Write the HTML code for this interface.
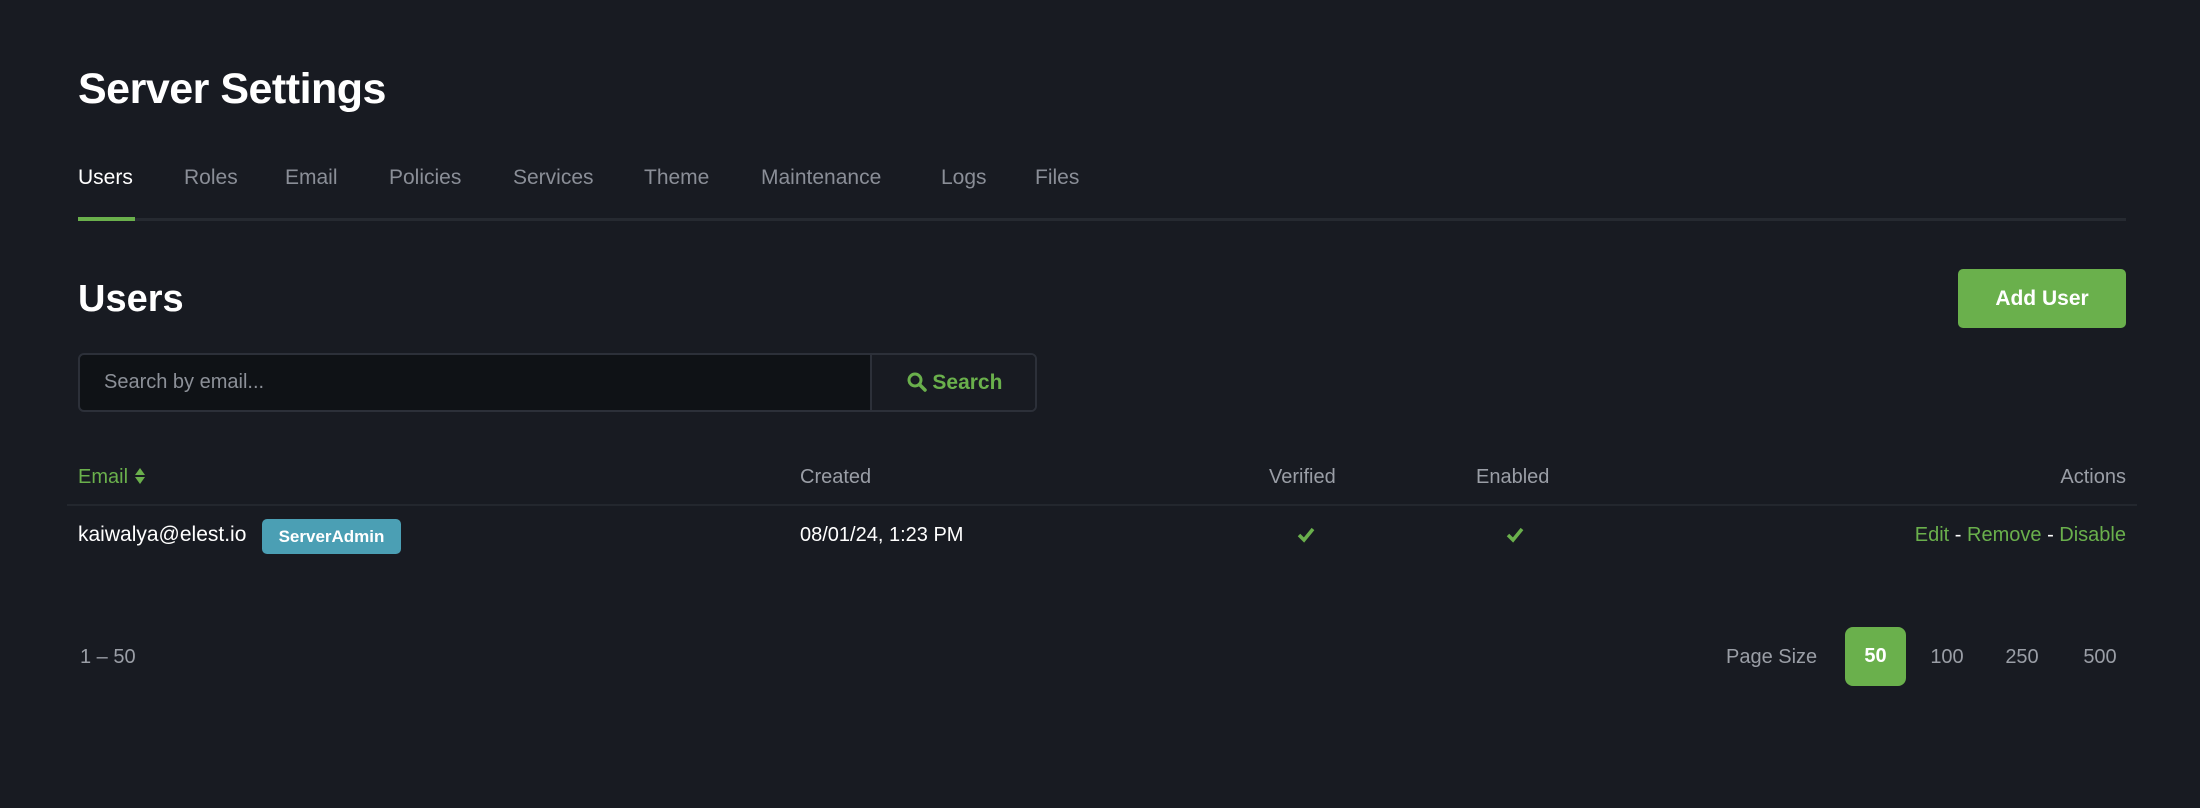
<!DOCTYPE html>
<html><head><meta charset="utf-8"><style>
*{box-sizing:border-box;margin:0;padding:0}
body{width:2200px;height:808px;background:#181b22;font-family:"Liberation Sans",sans-serif;color:#fff;position:relative;overflow:hidden}
.a{position:absolute;white-space:nowrap}
.tab{position:absolute;top:165px;font-size:21px;color:#8a8e97;line-height:26px}
.g{color:#6ab04c}
.h{font-size:20px;color:#9a9ea6;line-height:26px}
</style></head><body>
<div class="a" style="left:78px;top:64px;font-size:43px;font-weight:bold;letter-spacing:-0.5px;line-height:50px">Server Settings</div>
<div class="tab" style="left:78px;color:#fff">Users</div>
<div class="tab" style="left:184px">Roles</div>
<div class="tab" style="left:285px">Email</div>
<div class="tab" style="left:389px">Policies</div>
<div class="tab" style="left:513px">Services</div>
<div class="tab" style="left:644px">Theme</div>
<div class="tab" style="left:761px">Maintenance</div>
<div class="tab" style="left:941px">Logs</div>
<div class="tab" style="left:1035px">Files</div>
<div class="a" style="left:78px;top:218px;width:2048px;height:3px;background:#262a31"></div>
<div class="a" style="left:78px;top:217px;width:57px;height:4px;background:#6ab04c"></div>

<div class="a" style="left:78px;top:278px;font-size:38px;font-weight:bold;line-height:42px">Users</div>
<div class="a" style="left:1958px;top:269px;width:168px;height:59px;background:#6ab04c;border-radius:5px;font-size:21px;font-weight:bold;text-align:center;line-height:59px">Add User</div>

<div class="a" style="left:78px;top:353px;width:959px;height:59px;border:2px solid #2c3039;border-radius:6px;background:#0f1216;overflow:hidden">
 <div class="a" style="left:24px;top:0;line-height:55px;font-size:20px;color:#8c9098">Search by email...</div>
 <div class="a" style="left:790px;top:0;width:167px;height:55px;background:#181b22;border-left:2px solid #2c3039;text-align:center;line-height:55px;font-size:21px;font-weight:bold;color:#6ab04c">
  <svg width="20" height="20" viewBox="0 0 20 20" style="vertical-align:-3px"><circle cx="8" cy="8" r="6" fill="none" stroke="#6ab04c" stroke-width="3"/><path d="M12.5 12.5L18 18" stroke="#6ab04c" stroke-width="3.5" stroke-linecap="round"/></svg> Search</div>
</div>

<div class="a h g" style="left:78px;top:464px;color:#6ab04c">Email <svg width="12" height="18" viewBox="0 0 12 18" style="vertical-align:-2px"><path d="M6 1L11 8H1Z M6 17L11 10H1Z" fill="#6ab04c"/></svg></div>
<div class="a h" style="left:800px;top:464px">Created</div>
<div class="a h" style="left:1269px;top:464px">Verified</div>
<div class="a h" style="left:1476px;top:464px">Enabled</div>
<div class="a h" style="right:74px;top:464px">Actions</div>
<div class="a" style="left:67px;top:504px;width:2070px;height:2px;background:#23272e"></div>

<div class="a" style="left:78px;top:522px;font-size:21px;line-height:26px">kaiwalya@elest.io</div>
<div class="a" style="left:262px;top:519px;width:139px;height:35px;background:#4b9fb4;border-radius:5px;font-size:17px;font-weight:bold;text-align:center;line-height:35px">ServerAdmin</div>
<div class="a" style="left:800px;top:522px;font-size:20px;line-height:26px">08/01/24, 1:23 PM</div>
<svg class="a" style="left:1297px;top:527px" width="18" height="16" viewBox="0 0 18 16"><path d="M2 8L7 13L16 2" fill="none" stroke="#6ab04c" stroke-width="3.5"/></svg>
<svg class="a" style="left:1506px;top:527px" width="18" height="16" viewBox="0 0 18 16"><path d="M2 8L7 13L16 2" fill="none" stroke="#6ab04c" stroke-width="3.5"/></svg>
<div class="a" style="right:74px;top:522px;font-size:20px;line-height:26px;color:#6ab04c">Edit <span style="color:#fff">-</span> Remove <span style="color:#fff">-</span> Disable</div>

<div class="a" style="left:80px;top:644px;font-size:20px;line-height:26px;color:#9a9ea6">1 – 50</div>
<div class="a" style="left:1726px;top:644px;font-size:20px;line-height:26px;color:#9a9ea6">Page Size</div>
<div class="a" style="left:1845px;top:627px;width:61px;height:59px;background:#6ab04c;border-radius:8px;font-size:20px;font-weight:bold;text-align:center;line-height:59px">50</div>
<div class="a" style="left:1924px;top:644px;width:46px;text-align:center;font-size:20px;line-height:26px;color:#9a9ea6">100</div>
<div class="a" style="left:1999px;top:644px;width:46px;text-align:center;font-size:20px;line-height:26px;color:#9a9ea6">250</div>
<div class="a" style="left:2077px;top:644px;width:46px;text-align:center;font-size:20px;line-height:26px;color:#9a9ea6">500</div>
</body></html>
